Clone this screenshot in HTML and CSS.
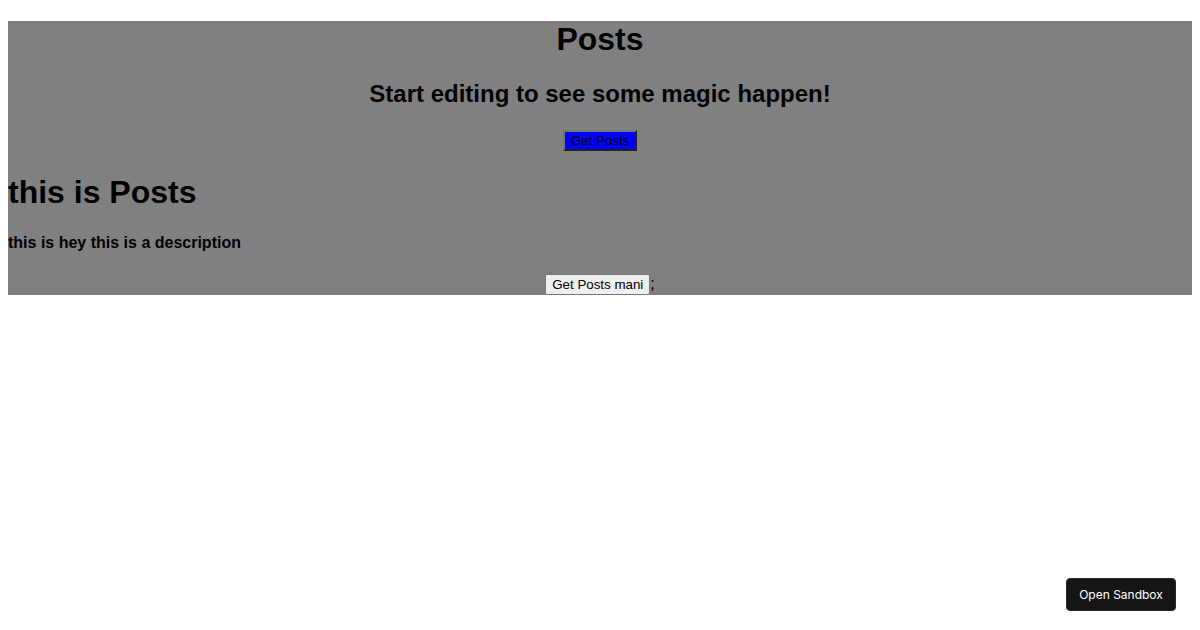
FILE: index.html
```html
<!DOCTYPE html>
<html>
<head>
<meta charset="utf-8">
<link rel="stylesheet" href="styles.css">
</head>
<body>
<div class="app">
  <h1>Posts</h1>
  <h2>Start editing to see some magic happen!</h2>
  <button class="blue-btn">Get Posts</button>
  <div class="post">
    <h1>this is Posts</h1>
    <h4>this is hey this is a description</h4>
  </div>
  <button class="plain-btn">Get Posts mani</button>;
</div>
<button class="sandbox">Open Sandbox</button>
</body>
</html>
```

FILE: styles.css
```css
body {
  margin: 0 8px 8px;
  font-family: "Liberation Sans", Arial, sans-serif;
}
.app {
  background: gray;
  text-align: center;
}
.app h1 {
  font-size: 2em;
  margin: 0.67em 0;
}
.app h2 {
  font-size: 1.5em;
  margin: 0.83em 0;
}
.blue-btn {
  background: blue;
  color: #000;
  font-family: "Liberation Sans", Arial, sans-serif;
  font-size: 13.33px;
  border: 2px outset #767676;
  padding: 1px 6px;
  height: 21px;
  box-sizing: border-box;
  margin-top: 2px;
  vertical-align: baseline;
}
.post {
  text-align: left;
}
.post h1 {
  margin-top: 23.5px;
}
.post h4 {
  font-size: 1em;
  margin: 22.5px 0 1.33em;
}
.plain-btn {
  font-family: "Liberation Sans", Arial, sans-serif;
  font-size: 13.33px;
  background: #efefef;
  color: #000;
  border: 1px solid #767676;
  border-radius: 2px;
  padding: 1px 6px;
  height: 21px;
  box-sizing: border-box;
  margin-top: 1px;
}
.sandbox {
  position: fixed;
  right: 24px;
  bottom: 19px;
  background: #151515;
  color: #fff;
  border: 1px solid #2a2a2a;
  border-radius: 4px;
  font-family: Inter, "Liberation Sans", sans-serif;
  font-size: 12px;
  padding: 0 12px;
  height: 33px;
  width: 110px;
}
```
